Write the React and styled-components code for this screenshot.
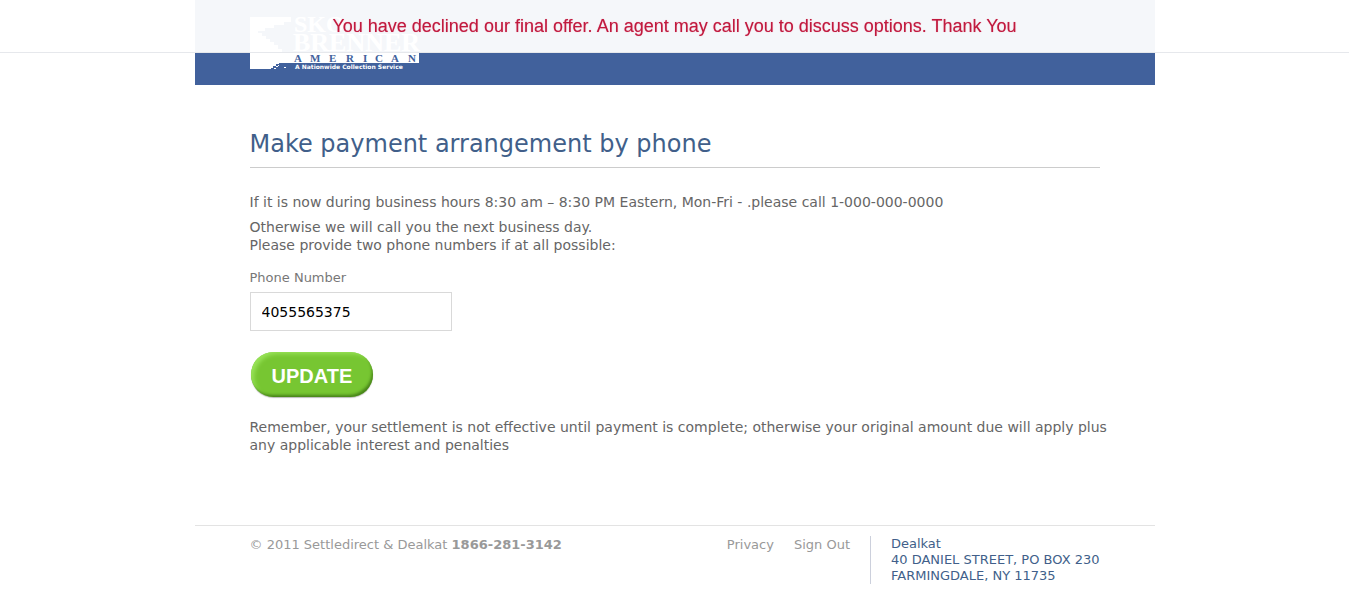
import React from "react";
import styled, { createGlobalStyle } from "styled-components";

const GlobalStyle = createGlobalStyle`
  *, *::before, *::after { box-sizing: border-box; }
  body {
    margin: 0;
    background: #fff;
    color: #666;
    font-family: "DejaVu Sans", Verdana, sans-serif;
    font-size: 14px;
    line-height: 18px;
  }
`;

const Notice = styled.div`
  position: fixed;
  top: 0;
  left: 0;
  right: 0;
  padding: 14px 20px;
  background: rgba(255, 255, 255, 0.95);
  border-bottom: 1px solid #e6e8ec;
  color: #c01a3e;
  font-family: "Liberation Sans", Arial, sans-serif;
  font-size: 18px;
  line-height: 24px;
  text-align: center;
  text-shadow: 0 0 1px #e58aa0;
`;

const Page = styled.div`
  max-width: 960px;
  margin: 0 auto;
`;

const Header = styled.header`
  padding: 16px 55px;
  background: #41619c;
`;

const LogoArt = styled.svg`
  display: block;
  overflow: visible;
`;

const Main = styled.main`
  padding: 40px 55px 71px;
`;

const Title = styled.h1`
  margin: 0 0 25px;
  padding: 3px 0 7px;
  border-bottom: 1px solid #ccc;
  color: #415f8a;
  font-size: 24px;
  font-weight: 400;
  line-height: 32px;
`;

const Text = styled.p`
  margin: 0 0 ${(p) => p.$gap || 0}px;
`;

const Reminder = styled(Text)`
  margin-right: -12px;
`;

const Form = styled.form`
  display: flex;
  flex-direction: column;
  align-items: flex-start;
  margin-bottom: 21px;
`;

const Label = styled.label`
  margin-bottom: 5px;
  color: #777;
  font-size: 13px;
`;

const PhoneInput = styled.input`
  width: 202px;
  height: 39px;
  margin-bottom: 21px;
  padding: 0 11px;
  border: 1px solid #d9d9d9;
  border-radius: 0;
  background: #fff;
  color: #000;
  font: inherit;
`;

const UpdateButton = styled.button`
  height: 45px;
  margin: 0 1px;
  padding: 2px 21px 0;
  border: 0;
  border-radius: 23px;
  background: #77c632;
  box-shadow:
    inset -2px -3px 3px -1px #468218,
    inset 4px 3px 4px -1px #98e358,
    0 1px 1px #bbb;
  color: #fff;
  font-family: "Liberation Sans", Arial, sans-serif;
  font-size: 20px;
  font-weight: 700;
  line-height: 24px;
`;

const Footer = styled.footer`
  display: flex;
  align-items: flex-start;
  padding: 10px 55px;
  border-top: 1px solid #e3e3e3;
  color: #999;
  font-size: 13px;
`;

const Copyright = styled.div`
  flex: 1;
`;

const FooterNav = styled.nav`
  display: flex;
  gap: 20px;
  padding-right: 20px;
`;

const FooterLink = styled.a`
  color: inherit;
  text-decoration: none;
`;

const Address = styled.address`
  padding-left: 20px;
  border-left: 1px solid #ccd0dc;
  color: #415f8a;
  font-style: normal;
  line-height: 16px;
`;

function Logo() {
  return (
    <LogoArt width="170" height="53" viewBox="0 0 170 53" role="img" aria-label="Sko Brenner American">
      <path
        fill="#fff"
        d="M0 1H41V6H34V9H24V12H15V15H8V17H12V20H16V23H20V26H24V29H28V33H32V37H169V47H29V48H26V50H23V52H21V53H0Z"
      />
      <path fill="#fff" d="M26 50h2v1h-2zM24 52h2v1h-2zM28 49h1v1h-1zM34 51h2v1h-2z" />
      <g fill="#fff" fontFamily="Liberation Serif, serif" fontWeight="700">
        <text x="44" y="16" fontSize="24">SKO</text>
        <text x="43" y="35" fontSize="26">BRENNER</text>
      </g>
      <text
        x="44 60 79 96 113 125 141 158"
        y="46"
        fill="#41619c"
        fontFamily="Liberation Serif, serif"
        fontWeight="700"
        fontSize="11"
      >
        AMERICAN
      </text>
      <text x="45" y="53" fill="#fff" fontFamily="DejaVu Sans, sans-serif" fontWeight="700" fontSize="6">
        A Nationwide Collection Service
      </text>
    </LogoArt>
  );
}

export default function App() {
  return (
    <>
      <GlobalStyle />
      <Page>
        <Header>
          <Logo />
        </Header>
        <Main>
          <Title>Make payment arrangement by phone</Title>
          <Text $gap={7}>
            If it is now during business hours 8:30 am – 8:30 PM Eastern, Mon-Fri - .please call 1-000-000-0000
          </Text>
          <Text $gap={15}>
            Otherwise we will call you the next business day.
            <br />
            Please provide two phone numbers if at all possible:
          </Text>
          <Form onSubmit={(e) => e.preventDefault()}>
            <Label htmlFor="phone">Phone Number</Label>
            <PhoneInput id="phone" type="tel" defaultValue="4055565375" />
            <UpdateButton type="submit">UPDATE</UpdateButton>
          </Form>
          <Reminder>
            Remember, your settlement is not effective until payment is complete; otherwise your original amount due
            will apply plus any applicable interest and penalties
          </Reminder>
        </Main>
        <Footer>
          <Copyright>
            © 2011 Settledirect &amp; Dealkat <strong>1866-281-3142</strong>
          </Copyright>
          <FooterNav>
            <FooterLink href="#privacy">Privacy</FooterLink>
            <FooterLink href="#signout">Sign Out</FooterLink>
          </FooterNav>
          <Address>
            Dealkat
            <br />
            40 DANIEL STREET, PO BOX 230
            <br />
            FARMINGDALE, NY 11735
          </Address>
        </Footer>
      </Page>
      <Notice role="alert">You have declined our final offer. An agent may call you to discuss options. Thank You</Notice>
    </>
  );
}
